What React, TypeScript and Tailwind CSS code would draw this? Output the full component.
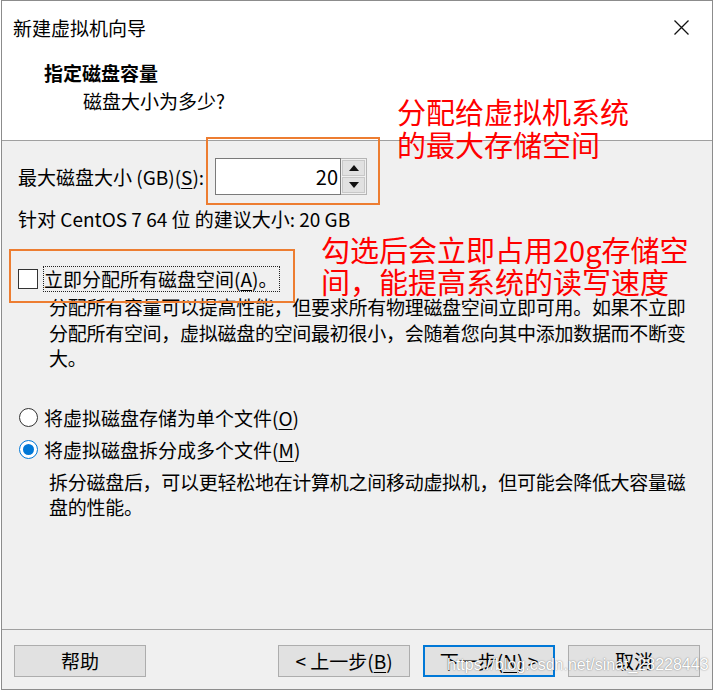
import React from "react";

const U = ({ c }: { c: string }) => <span className="underline underline-offset-[3px] decoration-1">{c}</span>;

function Btn({ children, primary }: { children: React.ReactNode; primary?: boolean }) {
  return (
    <div
      className={
        "w-[132px] h-[32px] flex items-center justify-center bg-[#e1e1e1] text-[19px] leading-[26px] text-black " +
        (primary ? "border-2 border-[#0078d7]" : "border border-[#adadad]")
      }
    >
      {children}
    </div>
  );
}

export default function App() {
  return (
    <div className="relative w-[716px] h-[691px] bg-white font-['Noto_Sans_CJK_SC',sans-serif] text-black overflow-hidden">
      <div className="ml-[1px] w-[712px] h-[690px] border border-[#8c8c8c] flex flex-col">
        {/* header */}
        <div className="h-[139px] bg-white flex flex-col">
          <div className="h-[53px] flex items-center justify-between pl-[11px] pr-[20px]">
            <span className="text-[19px] leading-[26px]">新建虚拟机向导</span>
            <svg width="15" height="15" viewBox="0 0 15 15" className="mr-[3px]">
              <path d="M0.5 0.5 L14.5 14.5 M14.5 0.5 L0.5 14.5" stroke="#111" strokeWidth="1.3" />
            </svg>
          </div>
          <div className="pl-[42px] mt-[6px] text-[19px] leading-[26px] font-bold">指定磁盘容量</div>
          <div className="pl-[81px] mt-[2px] text-[19px] leading-[26px]">磁盘大小为多少?</div>
        </div>
        <div className="h-px bg-[#a0a0a0]" />
        {/* body */}
        <div className="flex-1 bg-[#f0f0f0] flex flex-col text-[19px] leading-[26px]">
          <div className="mt-[17px] flex items-center pl-[16px]">
            <span className="w-[197px]">
              最大磁盘大小 (GB)(<U c="S" />):
            </span>
            <div className="flex h-[37px]">
              <div className="w-[126px] h-[37px] bg-white border border-[#7a7a7a] flex items-center justify-end pr-[2px] text-[20px]">
                20
              </div>
              <div className="w-[26px] h-[37px] border border-[#b5b5b5] border-l-0 flex flex-col bg-[#f0f0f0] p-px gap-px">
                <div className="flex-1 bg-[#e1e1e1] border border-[#c8c8c8] flex items-center justify-center">
                  <svg width="10" height="6" viewBox="0 0 10 6"><path d="M5 0 L10 6 L0 6 Z" fill="#111" /></svg>
                </div>
                <div className="flex-1 bg-[#e1e1e1] border border-[#c8c8c8] flex items-center justify-center">
                  <svg width="10" height="6" viewBox="0 0 10 6"><path d="M0 0 L10 0 L5 6 Z" fill="#111" /></svg>
                </div>
              </div>
            </div>
          </div>
          <div className="mt-[11px] pl-[16px]">针对 CentOS 7 64 位 的建议大小: 20 GB</div>
          <div className="mt-[34px] flex items-center pl-[16px] h-[26px]">
            <div className="w-[20px] h-[20px] bg-white border border-[#333]" />
            <div className="ml-[5px] border border-dotted border-[#222] h-[26px] flex items-center pr-[2px]">
              立即分配所有磁盘空间(<U c="A" />)。
            </div>
          </div>
          <div className="mt-[2px] pl-[47px] leading-[25.5px] whitespace-nowrap tracking-[-0.28px]">
            <div>分配所有容量可以提高性能，但要求所有物理磁盘空间立即可用。如果不立即</div>
            <div>分配所有空间，虚拟磁盘的空间最初很小，会随着您向其中添加数据而不断变</div>
            <div>大。</div>
          </div>
          <div className="mt-[34px] flex items-center pl-[17px] h-[26px]">
            <div className="w-[19px] h-[19px] rounded-full bg-white border border-[#333]" />
            <span className="ml-[6px]">将虚拟磁盘存储为单个文件(<U c="O" />)</span>
          </div>
          <div className="mt-[6px] flex items-center pl-[17px] h-[26px]">
            <div className="w-[19px] h-[19px] rounded-full bg-white border border-[#0078d7] flex items-center justify-center">
              <div className="w-[11px] h-[11px] rounded-full bg-[#0078d7]" />
            </div>
            <span className="ml-[6px]">将虚拟磁盘拆分成多个文件(<U c="M" />)</span>
          </div>
          <div className="mt-[6px] pl-[47px] leading-[25.5px] whitespace-nowrap tracking-[-0.28px]">
            <div>拆分磁盘后，可以更轻松地在计算机之间移动虚拟机，但可能会降低大容量磁</div>
            <div>盘的性能。</div>
          </div>
        </div>
        <div className="h-px bg-[#a0a0a0]" />
        {/* footer */}
        <div className="h-[59px] bg-[#f0f0f0] flex items-start pt-[15px] pl-[12px] pr-[12px]">
          <Btn>帮助</Btn>
          <div className="flex-1" />
          <div className="flex gap-[13px]">
            <Btn>&lt; 上一步(<U c="B" />)</Btn>
            <Btn primary>下一步(<U c="N" />) &gt;</Btn>
            <Btn>取消</Btn>
          </div>
        </div>
      </div>

      {/* annotations */}
      <div className="absolute left-[206px] top-[137px] w-[174px] h-[68px] border-2 border-[#ed7d31]" />
      <div className="absolute left-[9px] top-[249px] w-[286px] h-[54px] border-2 border-[#ed7d31]" />
      <div className="absolute left-[397px] top-[95px] text-[29px] leading-[33px] text-[#ff0000]">
        分配给虚拟机系统
        <br />
        的最大存储空间
      </div>
      <div className="absolute left-[321px] top-[233px] text-[29px] leading-[32px] text-[#ff0000]">
        勾选后会立即占用20g存储空
        <br />
        间，能提高系统的读写速度
      </div>
      <div className="absolute left-[447px] top-[655px] text-[16px] leading-[20px] font-['Liberation_Sans',sans-serif] text-white [text-shadow:0_0_1.5px_rgba(0,0,0,0.55)]">
        https://blog.csdn.net/sinat_28228443
      </div>
    </div>
  );
}
